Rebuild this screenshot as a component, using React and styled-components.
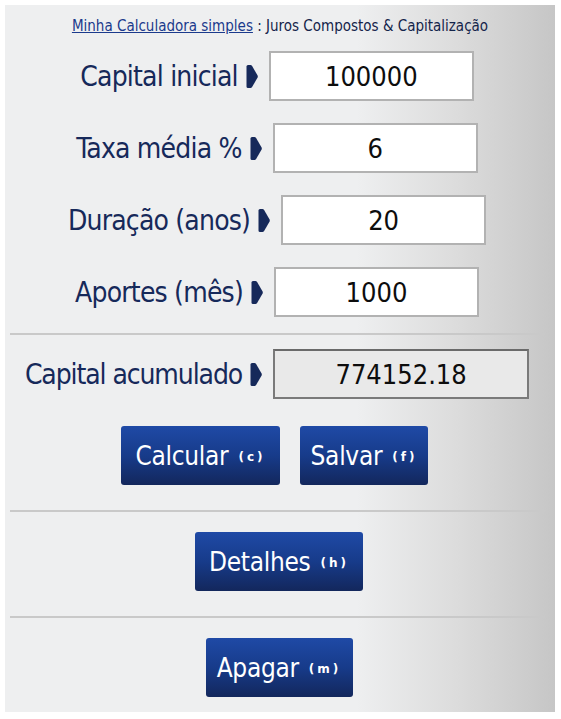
import React from "react";
import styled, { createGlobalStyle } from "styled-components";

const Global = createGlobalStyle`
  html, body { margin: 0; padding: 0; background: #fff; }
  body { font-family: "DejaVu Sans Condensed", "Liberation Sans", sans-serif; }
`;

const Panel = styled.div`
  margin: 5px 6px 0 5px;
  width: 550px;
  height: 707px;
  box-sizing: border-box;
  background: linear-gradient(90deg, #eeeff0 0%, #eeeff0 64%, #dcdcdc 82%, #c6c6c6 100%);
  display: flex;
  flex-direction: column;
  align-items: center;
  padding-top: 10px;
`;

const Title = styled.div`
  font-size: 15px;
  color: #14244a;
  height: 22px;
  line-height: 22px;
  a { color: #1b3a8c; text-decoration: underline; }
`;

const Row = styled.div`
  display: flex;
  align-items: center;
  justify-content: center;
  height: 50px;
  margin-top: ${(p) => p.$top}px;
  margin-right: 6px;
`;

const Label = styled.span`
  font-size: 28px;
  letter-spacing: ${(p) => (p.$tight ? -1.1 : -0.8)}px;
  color: #16295a;
  white-space: nowrap;
`;

const Arrow = styled.svg`
  width: 12px;
  height: 23px;
  margin: 0 11px 0 8px;
  flex: none;
`;

const Field = styled.div`
  width: ${(p) => p.$w}px;
  height: 50px;
  box-sizing: border-box;
  border: 2px solid ${(p) => (p.$readonly ? "#7a7a7a" : "#b2b2b2")};
  border-top-color: ${(p) => (p.$readonly ? "#6a6a6a" : "#b2b2b2")};
  background: ${(p) => (p.$readonly ? "#e9e9e9" : "#fff")};
  display: flex;
  align-items: center;
  justify-content: center;
  font-family: "DejaVu Sans Condensed", sans-serif;
  font-size: 27px;
  color: #0d0d0d;
`;

const Divider = styled.div`
  width: 535px;
  height: 2px;
  background: #c9c9c9;
  margin-top: ${(p) => p.$top}px;
  margin-right: 5px;
`;

const Buttons = styled.div`
  display: flex;
  gap: 20px;
  margin-top: ${(p) => p.$top}px;
  margin-right: ${(p) => p.$offset || 0}px;
`;

const Button = styled.button`
  width: ${(p) => p.$w}px;
  height: 59px;
  border: none;
  border-radius: 3px;
  background: linear-gradient(180deg, #1f4aa6 0%, #173b8a 50%, #13275c 100%);
  color: #fff;
  font-family: "DejaVu Sans Condensed", sans-serif;
  font-size: 26px;
  letter-spacing: -0.3px;
  display: flex;
  align-items: center;
  justify-content: center;
  padding: 0;
  cursor: pointer;
`;

const Key = styled.span`
  font-family: "DejaVu Sans", sans-serif;
  font-size: 12px;
  font-weight: bold;
  letter-spacing: 3px;
  margin-left: 10px;
  margin-top: 3px;
`;

const ArrowIcon = () => (
  <Arrow viewBox="0 0 12 23">
    <path d="M0.5 1.5 Q0.5 0 2 0 L4.5 0 Q5.5 0 6.1 1 L11.6 10.5 Q12 11.5 11.6 12.5 L6.1 22 Q5.5 23 4.5 23 L2 23 Q0.5 23 0.5 21.5 Z" fill="#16295a" />
  </Arrow>
);

const inputs = [
  { label: "Capital inicial", value: "100000", top: 14 },
  { label: "Taxa média %", value: "6", top: 22 },
  { label: "Duração (anos)", value: "20", top: 22 },
  { label: "Aportes (mês)", value: "1000", top: 22 },
];

export default function App() {
  return (
    <>
      <Global />
      <Panel>
        <Title>
          <a>Minha Calculadora simples</a> : Juros Compostos &amp; Capitalização
        </Title>
        {inputs.map((r) => (
          <Row key={r.label} $top={r.top}>
            <Label>{r.label}</Label>
            <ArrowIcon />
            <Field $w={205}>{r.value}</Field>
          </Row>
        ))}
        <Divider $top={16} />
        <Row $top={14}>
          <Label $tight>Capital acumulado</Label>
          <ArrowIcon />
          <Field $w={256} $readonly>774152.18</Field>
        </Row>
        <Buttons $top={27} $offset={11}>
          <Button $w={159}>Calcular<Key>(c)</Key></Button>
          <Button $w={128}>Salvar<Key>(f)</Key></Button>
        </Buttons>
        <Divider $top={25} />
        <Buttons $top={20} $offset={2}>
          <Button $w={168}>Detalhes<Key>(h)</Key></Button>
        </Buttons>
        <Divider $top={25} />
        <Buttons $top={20} $offset={2}>
          <Button $w={147}>Apagar<Key>(m)</Key></Button>
        </Buttons>
      </Panel>
    </>
  );
}
